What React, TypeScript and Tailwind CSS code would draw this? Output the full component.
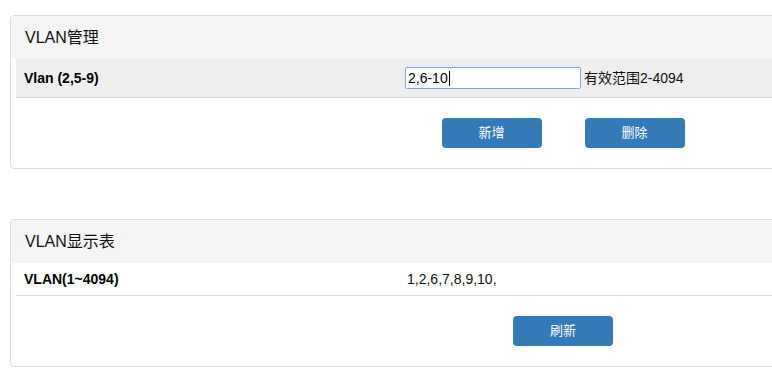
import React from "react";

const font = { fontFamily: '"Liberation Sans", Arial, "Noto Sans CJK SC", sans-serif' };

function Panel({ title, children }: { title: string; children: React.ReactNode }) {
  return (
    <div className="w-[1106px] rounded-[4px] border border-[#dddddd] bg-white">
      <div className="flex h-[43px] items-center rounded-t-[4px] bg-[#f5f5f5] px-[14px] text-[16px] text-[#111]">
        {title}
      </div>
      <div className="px-[5px]">{children}</div>
    </div>
  );
}

function Btn({ label }: { label: string }) {
  return (
    <button className="flex h-[30px] w-[100px] items-center justify-center rounded-[4px] bg-[#337ab7] text-[13px] text-white">
      {label}
    </button>
  );
}

export default function App() {
  return (
    <div className="h-[368px] w-[772px] overflow-hidden bg-white pl-[10px] pt-[15px]" style={font}>
      <Panel title="VLAN管理">
        <div className="flex h-[39px] items-center border-b border-[#d8d8d8] bg-[#eeeeee]">
          <div className="w-[389px] pl-[8px] text-[14px] font-bold text-black">Vlan (2,5-9)</div>
          <div className="flex h-[22px] w-[176px] items-center rounded-[2px] border border-[#80a8e4] bg-white pl-[2px] text-[14px] text-black">
            2,6-10
            <span className="ml-[1px] h-[15px] w-px bg-black" />
          </div>
          <span className="ml-[3px] text-[14px] text-[#111]">有效范围2-4094</span>
        </div>
        <div className="flex justify-center gap-[43px] py-[20px]">
          <Btn label="新增" />
          <Btn label="删除" />
        </div>
      </Panel>

      <div className="mt-[50px]">
        <Panel title="VLAN显示表">
          <div className="flex h-[33px] items-center border-b border-[#d8d8d8] bg-white">
            <div className="w-[389px] pl-[8px] text-[14px] font-bold text-black">VLAN(1~4094)</div>
            <div className="pl-[2px] text-[14px] text-[#111]">1,2,6,7,8,9,10,</div>
          </div>
          <div className="flex justify-center py-[20px]">
            <Btn label="刷新" />
          </div>
        </Panel>
      </div>
    </div>
  );
}
